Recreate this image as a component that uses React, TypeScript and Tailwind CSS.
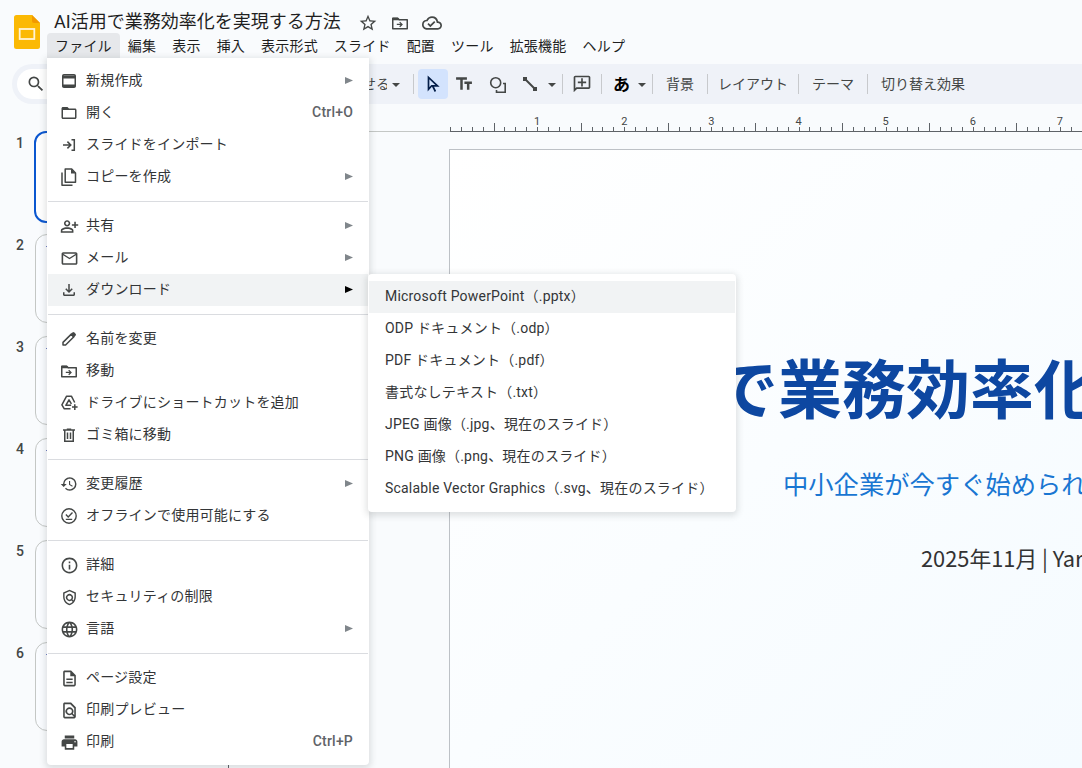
import type { ReactNode } from "react";
import clsx from "clsx";
import {
    MdFolderOpen,
    MdHistory,
    MdInfoOutline,
    MdLanguage,
    MdMailOutline,
    MdOutlineAddComment,
    MdOutlineCloudDone,
    MdOutlineDescription,
    MdOutlineFileDownload,
    MdOutlineFindInPage,
    MdOutlinePersonAddAlt,
    MdOutlinePolicy,
    MdPrint,
    MdSearch,
    MdStarBorder,
    MdTextFields,
} from "react-icons/md";

type MenuItem = {
    label: string;
    icon: ReactNode;
    shortcut?: string;
    submenu?: boolean;
    active?: boolean;
};

const NewIcon = () => (
    <svg width="14" height="14" viewBox="0 0 14 14">
        <rect x="0.75" y="0.75" width="12.5" height="12.5" rx="1.2" fill="none" stroke="currentColor" strokeWidth="1.5" />
        <path d="M0.5 1.5h13V4.500H.5zM.5 10.5h13V13H.5z" fill="currentColor" />
    </svg>
);

const ImportIcon = () => (
    <svg width="14" height="14" viewBox="0 0 14 14" fill="none" stroke="currentColor" strokeWidth="1.5">
        <path d="M1 7h7.6M5.4 3.6L8.8 7l-3.400 3.400M9.500 1.700h2.800v10.600H9.500" />
    </svg>
);

const CopyIcon = () => (
    <svg width="16" height="18" viewBox="0 0 16 18" fill="none" stroke="currentColor" strokeWidth="1.5">
        <path d="M4.200 1h6.500L14.500 5v9.200H4.200zM1 4.500v12.700h10.500" strokeLinejoin="round" />
        <path d="M10 .8l4.700 4.700H10z" fill="currentColor" stroke="none" />
    </svg>
);

const PenIcon = () => (
    <svg width="16" height="16" viewBox="0 0 16 16">
        <path d="M2 14v-2.600l8.300-8.300 2.600 2.600L4.600 14z" fill="none" stroke="currentColor" strokeWidth="1.500" strokeLinejoin="round" />
        <path d="M9.300 3.600l2.200-2.200a1.300 1.300 0 0 1 1.800 0l1.300 1.300a1.300 1.300 0 0 1 0 1.800l-2.200 2.200z" fill="currentColor" />
    </svg>
);

const MoveIcon = () => (
    <svg width="16" height="13" viewBox="0 0 16 13" fill="none" stroke="currentColor" strokeWidth="1.5">
        <path d="M.75 1.200h5l1.500 1.500h8v9.100H.75z" strokeLinejoin="round" />
        <path d="M.8.800h5l2 2.400H.8z" fill="currentColor" stroke="none" />
        <path d="M4.800 7.400h5M7.700 5.100L10 7.400 7.700 9.700" strokeWidth="1.300" />
    </svg>
);

const DriveIcon = () => (
    <svg width="17" height="16" viewBox="0 0 17 16" fill="none" stroke="currentColor" strokeWidth="1.500" strokeLinejoin="round">
        <path d="M9.500 13.800H3.300L.9 9.900 5.600 1.200h4.800l3.300 6.300" />
        <path d="M10.200 10.300H4.800L8 4.900l2.400 4" />
        <path d="M13.800 9.300v5.600M11 12.100h5.600" />
    </svg>
);

const TrashIcon = () => (
    <svg width="14" height="16" viewBox="0 0 14 16" fill="none" stroke="currentColor" strokeWidth="1.5">
        <path d="M1 3h12M4.8 2.2h4.4M2.75 3v11.2h8.5V3M5.5 5.5v6.5M8.5 5.5v6.5" />
    </svg>
);

const OfflineIcon = () => (
    <svg width="16" height="16" viewBox="0 0 16 16" fill="none" stroke="currentColor" strokeWidth="1.400">
        <circle cx="8" cy="8" r="7.200" />
        <path d="M4.800 11.400h6.400M4.900 6.600l2.300 2.300 4.300-4.300" />
    </svg>
);

const menuGroups: MenuItem[][] = [
    [
        { label: "新規作成", icon: <NewIcon />, submenu: true },
        { label: "開く", icon: <MdFolderOpen size={18} />, shortcut: "Ctrl+O" },
        { label: "スライドをインポート", icon: <ImportIcon /> },
        { label: "コピーを作成", icon: <CopyIcon />, submenu: true },
    ],
    [
        { label: "共有", icon: <MdOutlinePersonAddAlt size={19} />, submenu: true },
        { label: "メール", icon: <MdMailOutline size={19} />, submenu: true },
        { label: "ダウンロード", icon: <MdOutlineFileDownload size={18} />, submenu: true, active: true },
    ],
    [
        { label: "名前を変更", icon: <PenIcon /> },
        { label: "移動", icon: <MoveIcon /> },
        { label: "ドライブにショートカットを追加", icon: <DriveIcon /> },
        { label: "ゴミ箱に移動", icon: <TrashIcon /> },
    ],
    [
        { label: "変更履歴", icon: <MdHistory size={18} />, submenu: true },
        { label: "オフラインで使用可能にする", icon: <OfflineIcon /> },
    ],
    [
        { label: "詳細", icon: <MdInfoOutline size={19} /> },
        { label: "セキュリティの制限", icon: <MdOutlinePolicy size={17} /> },
        { label: "言語", icon: <MdLanguage size={19} />, submenu: true },
    ],
    [
        { label: "ページ設定", icon: <MdOutlineDescription size={19} /> },
        { label: "印刷プレビュー", icon: <MdOutlineFindInPage size={19} /> },
        { label: "印刷", icon: <MdPrint size={19} />, shortcut: "Ctrl+P" },
    ],
];

const downloadFormats = [
    "Microsoft PowerPoint（.pptx）",
    "ODP ドキュメント（.odp）",
    "PDF ドキュメント（.pdf）",
    "書式なしテキスト（.txt）",
    "JPEG 画像（.jpg、現在のスライド）",
    "PNG 画像（.png、現在のスライド）",
    "Scalable Vector Graphics（.svg、現在のスライド）",
];

const menuBar = ["ファイル", "編集", "表示", "挿入", "表示形式", "スライド", "配置", "ツール", "拡張機能", "ヘルプ"];

function Header() {
    return (
        <header className="flex h-16 shrink-0">
            <svg className="ml-[14px] mt-[15px] shrink-0" width="26" height="34" viewBox="0 0 26 34">
                <path d="M2.500 0H18l8 8v23.500a2.500 2.500 0 0 1-2.500 2.500h-21A2.500 2.500 0 0 1 0 31.500v-29A2.500 2.500 0 0 1 2.500 0z" fill="#fbb904" />
                <path d="M18 0l8 8h-6a2 2 0 0 1-2-2z" fill="#f29900" />
                <rect x="5.700" y="14" width="14.600" height="10" fill="none" stroke="#fff3d6" strokeWidth="1.800" />
            </svg>
            <div className="ml-[7px] flex flex-col">
                <div className="flex h-[33px] items-center pl-[7px] pt-[11px] text-[#444746]">
                    <h1 className="whitespace-nowrap text-[18px] leading-6 text-[#1f1f1f]">AI活用で業務効率化を実現する方法</h1>
                    <div className="ml-[17px] mt-0.5 flex items-center">
                        <MdStarBorder size={20} />
                        <div className="ml-[14px] mr-[14px]">
                            <MoveIcon />
                        </div>
                        <MdOutlineCloudDone size={20} />
                    </div>
                </div>
                <nav className="flex h-[25px] text-sm tracking-[0.2px] text-[#1f1f1f]">
                    {menuBar.map((label, i) => (
                        <button
                            key={label}
                            className={clsx(
                                "flex items-center whitespace-nowrap rounded-t px-2 pt-px",
                                i === 0 && "bg-[#e6e8eb]",
                            )}
                        >
                            {label}
                        </button>
                    ))}
                </nav>
            </div>
        </header>
    );
}

const Caret = ({ className }: { className?: string }) => (
    <svg className={clsx("shrink-0", className)} width="8" height="4" viewBox="0 0 8 4">
        <path d="M0 0h8L4 4z" fill="#444746" />
    </svg>
);

const Divider = ({ className }: { className?: string }) => (
    <div className={clsx("h-5 w-px shrink-0 bg-[#c7c9cc]", className)} />
);

function Toolbar() {
    return (
        <div className="ml-3 flex h-10 shrink-0 items-center overflow-hidden rounded-l-full bg-[#eff2f8] text-sm text-[#444746]">
            <div className="ml-[5px] flex h-[30px] w-[303px] shrink-0 items-center rounded-full bg-white pl-[9px]">
                <MdSearch size={20} />
            </div>
            <div className="w-[67px] shrink-0 overflow-hidden whitespace-nowrap">に合わせる</div>
            <Caret className="ml-[5px] mt-[2px]" />
            <Divider className="ml-[13px]" />
            <button className="ml-1 flex h-[30px] w-[30px] shrink-0 items-center justify-center rounded bg-[#d3e3fd] text-[#041e49]">
                <svg width="14" height="18" viewBox="0 0 14 18" fill="none" stroke="currentColor" strokeWidth="1.700">
                    <path d="M2.500 2.500v11.800l3.200-3.500h5.800zM6.400 10.500l3 6" />
                </svg>
            </button>
            <MdTextFields size={20} className="ml-[6px] shrink-0" />
            <svg className="ml-[15px] mt-0.5 shrink-0" width="18" height="18" viewBox="0 0 18 18" fill="none" stroke="currentColor" strokeWidth="1.600">
                <circle cx="6.700" cy="6.700" r="5" />
                <path d="M14 7.500h2.200v8.700H7.500V14" />
            </svg>
            <svg className="ml-[15px] shrink-0" width="16" height="16" viewBox="0 0 16 16">
                <path d="M3 3l10 10" stroke="currentColor" strokeWidth="2" />
                <path d="M1 1h4v4H1zM11 11h4v4h-4z" fill="currentColor" />
            </svg>
            <Caret className="ml-[10px] mt-[2px]" />
            <Divider className="ml-[6px]" />
            <MdOutlineAddComment size={20} className="ml-[9px] shrink-0 -scale-x-100" />
            <Divider className="ml-[9px]" />
            <span className="ml-[11px] mt-px w-[17px] shrink-0 text-[17px] font-bold leading-5 text-black">あ</span>
            <Caret className="ml-[8px] mt-[2px]" />
            <Divider className="ml-[6px]" />
            <span className="ml-[13px] w-[41px] shrink-0">背景</span>
            <Divider />
            <span className="ml-[10px] w-[80px] shrink-0">レイアウト</span>
            <Divider />
            <span className="ml-[13px] w-[55px] shrink-0">テーマ</span>
            <Divider />
            <span className="ml-[13px] shrink-0">切り替え効果</span>
        </div>
    );
}

function Filmstrip() {
    return (
        <aside className="flex w-[229px] shrink-0 flex-col gap-[13px] border-r border-[#5f6368] pt-7">
            {[1, 2, 3, 4, 5, 6].map((n) => (
                <div key={n} className="flex h-[89px] shrink-0">
                    <span className="w-[35px] pr-[11px] pt-1 text-right text-sm font-medium leading-[15px] text-[#444746]">{n}</span>
                    <div
                        className={clsx(
                            "w-[160px] rounded-xl",
                            n === 1
                                ? "-mt-px -ml-px h-[92px] border-2 border-[#0b57d0] bg-white"
                                : "h-[89px] border border-[#c4c7c5] bg-[#fafcff] pl-[10px] pt-[11px]",
                        )}
                    >
                        {n !== 1 && n !== 5 && <div className="h-px w-20 bg-[#6f7fc4]" />}
                    </div>
                </div>
            ))}
        </aside>
    );
}

function Ruler() {
    return (
        <div className="flex h-7 shrink-0 overflow-hidden">
            <div className="w-[221px] shrink-0 border-b border-[#c4c7c5]" />
            <div className="flex flex-1 items-end border-b border-[#5f6368]">
                {Array.from({ length: 60 }, (_, i) => (
                    <div key={i} className="flex w-[10.900px] shrink-0 flex-col">
                        {i > 0 && i % 8 === 0 && (
                            <span className="flex w-3 -translate-x-1.5 justify-center text-[11px] leading-[11px] text-[#444746]">
                                {i / 8}
                            </span>
                        )}
                        <div className={clsx("border-l border-[#5f6368]", i % 8 === 4 ? "h-2" : "h-1")} />
                    </div>
                ))}
            </div>
        </div>
    );
}

function Slide() {
    return (
        <div className="ml-[220px] mt-[17px] flex-1 overflow-hidden whitespace-nowrap border-l border-t border-[#bdc1c6] bg-linear-to-br from-white to-[#f5fbff] font-['Noto_Sans_CJK_JP',sans-serif]">
            <p className="pl-[264px] pt-[191px] text-[64px] font-bold leading-[88px] text-[#0d47a1]">で業務効率化</p>
            <p className="pl-[333px] pt-[36px] text-[25.300px] leading-9 text-[#1976d2]">中小企業が今すぐ始められる</p>
            <p className="pl-[471px] pt-[41px] text-[21.800px] leading-8 text-[#333]">2025年11月 | Yar</p>
        </div>
    );
}

function FileMenu() {
    return (
        <div className="absolute left-[47px] top-[58px] z-10 w-[322px] rounded-b bg-white px-px py-[7px] text-sm tracking-[0.2px] text-[#333537] shadow-[0_2px_6px_2px_rgba(60,64,67,0.15)]">
            {menuGroups.map((group, i) => (
                <div key={i} className={clsx(i > 0 && "mt-2 border-t border-[#dadce0] pt-2")}>
                    {group.map((item) => (
                        <div key={item.label} className={clsx("flex h-8 items-center pb-[3px]", item.active && "bg-[#f1f3f4]")}>
                            <span className="ml-[11px] mr-[7px] flex w-5 justify-center pt-[3px] text-[#444746]">{item.icon}</span>
                            <span className="flex-1">{item.label}</span>
                            {item.shortcut && <span className="mr-[15px] font-medium text-[#5f6368]">{item.shortcut}</span>}
                            {item.submenu && (
                                <svg className={clsx("mr-[15px] mt-0.5", item.active ? "text-black" : "text-[#80868b]")} width="8" height="7" viewBox="0 0 8 7">
                                    <path d="M0 0l8 3.500L0 7z" fill="currentColor" />
                                </svg>
                            )}
                        </div>
                    ))}
                </div>
            ))}
        </div>
    );
}

function DownloadMenu() {
    return (
        <div className="absolute left-[368px] top-[274px] z-20 w-[368px] rounded bg-white px-px py-[7px] text-sm tracking-[0.2px] text-[#333537] shadow-[0_2px_6px_2px_rgba(60,64,67,0.15)]">
            {downloadFormats.map((label, i) => (
                <div key={label} className={clsx("flex h-8 items-center whitespace-nowrap pb-0.5 pl-4", i === 0 && "bg-[#f1f3f4]")}>
                    {label}
                </div>
            ))}
        </div>
    );
}

export default function App() {
    return (
        <div className="relative flex h-screen w-full flex-col overflow-hidden bg-[#f9fbfd] font-[Roboto,'Noto_Sans_CJK_JP',sans-serif]">
            <Header />
            <Toolbar />
            <div className="flex min-h-0 flex-1">
                <Filmstrip />
                <main className="flex min-w-0 flex-1 flex-col">
                    <Ruler />
                    <Slide />
                </main>
            </div>
            <FileMenu />
            <DownloadMenu />
        </div>
    );
}
